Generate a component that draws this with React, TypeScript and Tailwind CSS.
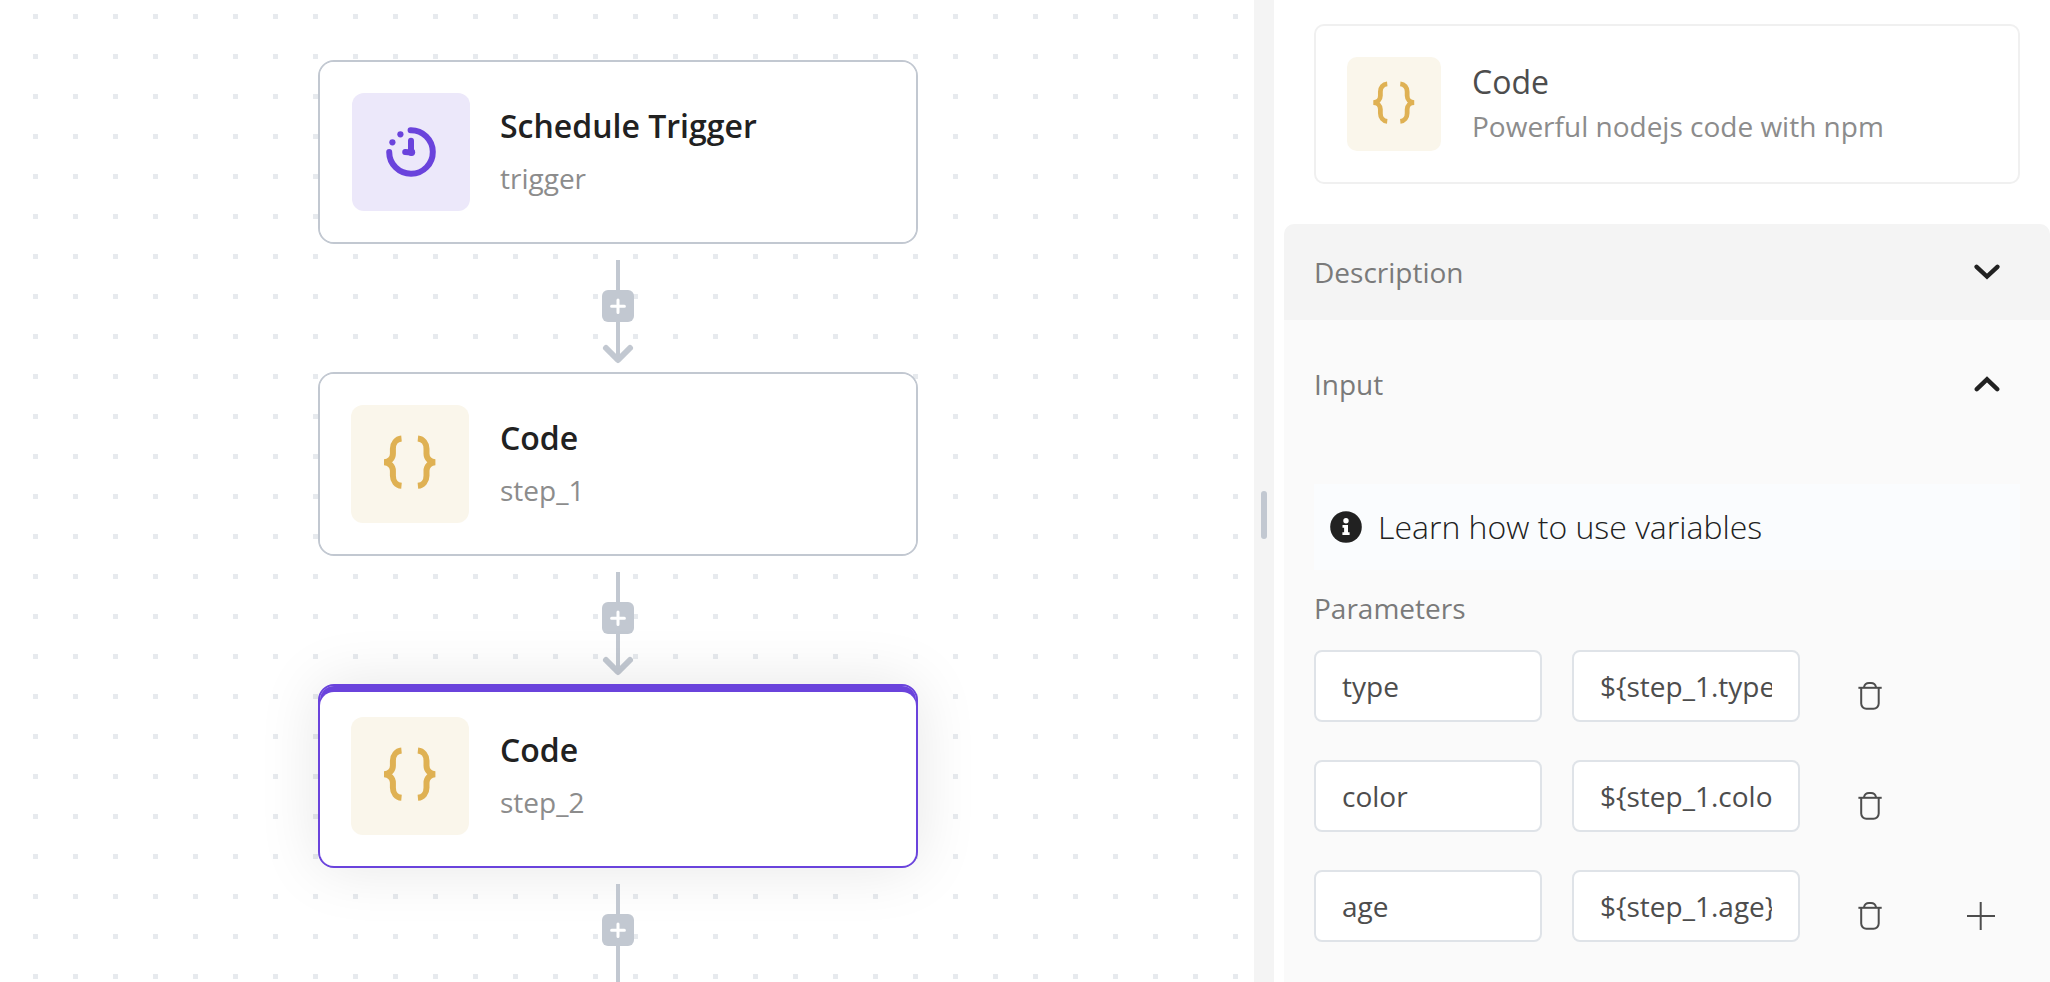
import type { ReactNode } from "react";

const parameters = [
  { name: "type", value: "${step_1.type}" },
  { name: "color", value: "${step_1.color}" },
  { name: "age", value: "${step_1.age}" },
];

function Braces({ className }: { className: string }) {
  return (
    <svg viewBox="0 0 118 118" className={className} fill="none" stroke="#dfb153" strokeWidth="6">
      <path d="M50.5 33.6C45.3 34.1 41.9 38.5 41.9 43.7V48.7C41.9 53.2 38.4 57.2 33 57.2C38.4 57.2 41.9 61.2 41.9 65.7V70.7C41.9 75.9 45.3 80.3 50.5 80.8" />
      <path d="M66.9 33.6C72.1 34.1 75.5 38.5 75.5 43.7V48.7C75.5 53.2 79 57.2 84.4 57.2C79 57.2 75.5 61.2 75.5 65.7V70.7C75.5 75.9 72.1 80.3 66.9 80.8" />
    </svg>
  );
}

function Clock() {
  return (
    <svg viewBox="0 0 118 118" className="size-[118px]" fill="none" stroke="#6a43dc" strokeWidth="6" strokeLinecap="round" strokeLinejoin="round">
      <path d="M58.6 37.2A21.8 21.8 0 1 1 37.2 59" />
      <path d="M59 47.8V59.6L53.2 59" />
      <circle cx="59.5" cy="59.3" r="3.7" fill="#6a43dc" stroke="none" />
      <circle cx="48.4" cy="41.3" r="3.1" fill="#6a43dc" stroke="none" />
      <circle cx="40.4" cy="49.3" r="3.1" fill="#6a43dc" stroke="none" />
    </svg>
  );
}

function StepCard({ title, name, icon, tint, pad, selected = false }: { title: string; name: string; icon: ReactNode; tint: string; pad: string; selected?: boolean }) {
  return (
    <div
      className={`flex h-[184px] w-[600px] shrink-0 flex-col rounded-2xl border-2 bg-white ${
        selected ? "border-[#6a43dc] shadow-[0_0_62px_rgba(0,0,0,0.1)]" : "border-[#c2c8d1]"
      }`}
    >
      <div className={`flex flex-1 flex-col rounded-[14px] ${selected ? "bg-[#6a43dc] pt-1.5" : ""}`}>
        <div className={`flex flex-1 rounded-[14px] bg-white ${selected ? "pt-[25px]" : "pt-[31px]"} ${pad}`}>
          <div className={`size-[118px] shrink-0 rounded-xl ${tint}`}>{icon}</div>
          <div className="flex flex-col gap-3 pt-[13px]">
            <div className="text-[32px] leading-10 font-semibold text-[#212121]">{title}</div>
            <div className="text-[28px] leading-10 text-[#8c8c8c]">{name}</div>
          </div>
        </div>
      </div>
    </div>
  );
}

function Connector({ last = false }: { last?: boolean }) {
  return (
    <svg viewBox="0 0 40 128" className="h-32 w-10 shrink-0" fill="none" strokeLinecap="round" strokeLinejoin="round">
      <path d={last ? "M20 16V128" : "M20 16V114"} stroke="#c2c8d1" strokeWidth="4" strokeLinecap="butt" />
      {!last && <path d="M8 104L20 116L32 104" stroke="#c2c8d1" strokeWidth="6" />}
      <rect x="4" y="46" width="32" height="32" rx="6" fill="#c2c8d1" />
      <path d="M20 56V68.6M13.6 62.3H26.4" stroke="#fff" strokeWidth="3" />
    </svg>
  );
}

function Chevron({ up = false }: { up?: boolean }) {
  return (
    <svg viewBox="0 0 26 16" className="h-4 w-[26px]" fill="none" stroke="#212121" strokeWidth="4.4" strokeLinecap="round" strokeLinejoin="miter">
      <path d={up ? "M2.8 13.2L13 3.4L23.2 13.2" : "M2.6 2.8L13 12.6L23.4 2.8"} />
    </svg>
  );
}

function Trash() {
  return (
    <svg viewBox="0 0 24 28" className="h-7 w-6" fill="none" stroke="#4d4d4d" strokeWidth="2">
      <path d="M0.4 5.8H23.7" />
      <path d="M3.2 5.8V21.6A5.2 5.2 0 0 0 8.4 26.8H15.5A5.2 5.2 0 0 0 20.7 21.6V5.8" />
      <path d="M6 5.2C6.6 2.6 8.6 1.1 11 1.1H13C15.4 1.1 17.4 2.6 18 5.2" />
    </svg>
  );
}

export default function App() {
  return (
    <div className="flex h-[982px] w-[2050px] overflow-hidden bg-white font-['Open_Sans',sans-serif]">
      <main className="flex w-[1254px] shrink-0 flex-col items-center pt-[60px] pr-[18px] [background:conic-gradient(from_270deg_at_5px_5px,#e7eaee_90deg,transparent_0)_33px_14px/40px_40px]">
        <StepCard title="Schedule Trigger" name="trigger" icon={<Clock />} tint="bg-[#ece8fa]" pad="gap-[30px] pl-8" />
        <Connector />
        <StepCard title="Code" name="step_1" icon={<Braces className="size-[118px]" />} tint="bg-[#faf6eb]" pad="gap-[31px] pl-[31px]" />
        <Connector />
        <StepCard title="Code" name="step_2" icon={<Braces className="size-[118px]" />} tint="bg-[#faf6eb]" pad="gap-[31px] pl-[31px]" selected />
        <Connector last />
      </main>

      <div className="flex w-5 shrink-0 items-center justify-center bg-[#f4f4f4] pt-[48px]">
        <div className="h-12 w-1.5 rounded-full bg-[#c2c8d1]" />
      </div>

      <aside className="flex flex-1 flex-col pt-6 pl-2.5">
        <div className="mr-[30px] mb-10 ml-[30px] flex h-40 shrink-0 rounded-[10px] border-2 border-[#f0f0f0] pt-[31px] pl-[31px]">
          <div className="size-[94px] shrink-0 rounded-[10px] bg-[#faf6eb]">
            <Braces className="size-[94px]" />
          </div>
          <div className="flex flex-col gap-1 pt-[5px] pl-[31px]">
            <div className="text-[32px] leading-10 text-[#4d4d4d]">Code</div>
            <div className="text-[28px] leading-10 text-[#8c8c8c]">Powerful nodejs code with npm</div>
          </div>
        </div>

        <div className="flex h-24 shrink-0 items-center justify-between rounded-t-[10px] bg-[#f4f4f4] pr-[50px] pl-[30px] text-[28px] text-[#7a7a7a]">
          <span>Description</span>
          <Chevron />
        </div>

        <section className="flex flex-1 flex-col bg-[#fafafa] pl-[30px]">
          <div className="flex h-32 shrink-0 items-center justify-between pr-[50px] text-[28px] text-[#7a7a7a]">
            <span>Input</span>
            <Chevron up />
          </div>
          <div className="mt-9 mr-[30px] flex h-[86px] shrink-0 items-center gap-4 bg-[#fafcfe] pl-4">
            <svg viewBox="0 0 32 32" className="size-8">
              <circle cx="16" cy="16" r="15.8" fill="#212121" />
              <circle cx="16" cy="9.8" r="2.7" fill="#fff" />
              <path d="M12.5 14H18V21.2H19.6V24H12.4V21.2H14.1V16.8H12.5Z" fill="#fff" />
            </svg>
            <span className="text-[32px] leading-10 font-light text-[#212121]">Learn how to use variables</span>
          </div>
          <div className="mt-[18px] mb-[22px] text-[28px] leading-10 text-[#7a7a7a]">Parameters</div>
          <div className="flex flex-col gap-[38px]">
            {parameters.map((p, i) => (
              <div key={p.name} className="flex h-[72px]">
                <input readOnly defaultValue={p.name} className="w-[228px] rounded-lg border-2 border-[#dfe3e8] bg-white px-[26px] text-[28px] text-[#4d4d4d] outline-none" />
                <input readOnly defaultValue={p.value} className="ml-[30px] w-[228px] rounded-lg border-2 border-[#dfe3e8] bg-white px-[26px] text-[28px] text-[#4d4d4d] outline-none" />
                <div className="flex pt-8 pl-[58px]">
                  <Trash />
                  {i === parameters.length - 1 && (
                    <svg viewBox="0 0 28 28" className="ml-[85px] size-7" stroke="#4d4d4d" strokeWidth="2">
                      <path d="M13.7 0V28M0 13.9H28" />
                    </svg>
                  )}
                </div>
              </div>
            ))}
          </div>
        </section>
      </aside>
    </div>
  );
}
